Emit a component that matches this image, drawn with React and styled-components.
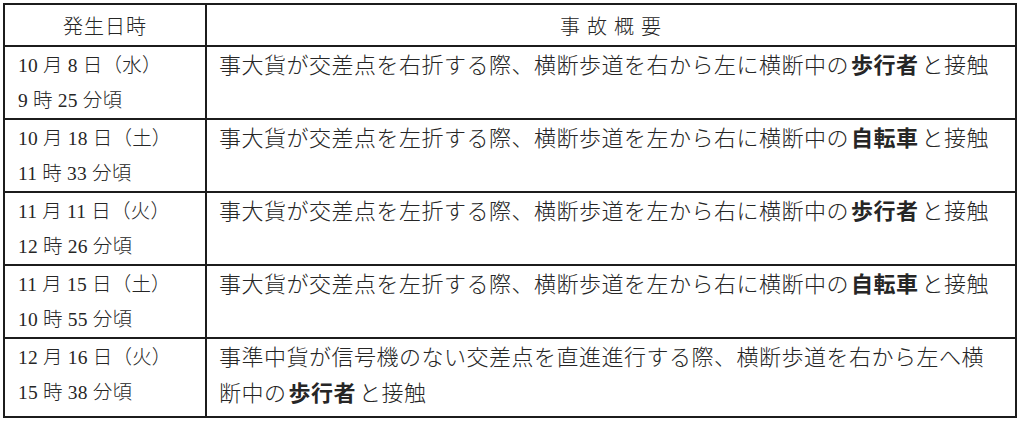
import React from "react";
import styled, { createGlobalStyle } from "styled-components";

const GlobalStyle = createGlobalStyle`
    body {
        margin: 0;
        background: #ffffff;
    }
`;

const accidents = [
    { date: "10 月 8 日（水）", time: "9 時 25 分頃", before: "事大貨が交差点を右折する際、横断歩道を右から左に横断中の", target: "歩行者", after: "と接触", tall: false },
    { date: "10 月 18 日（土）", time: "11 時 33 分頃", before: "事大貨が交差点を左折する際、横断歩道を左から右に横断中の", target: "自転車", after: "と接触", tall: false },
    { date: "11 月 11 日（火）", time: "12 時 26 分頃", before: "事大貨が交差点を左折する際、横断歩道を左から右に横断中の", target: "歩行者", after: "と接触", tall: false },
    { date: "11 月 15 日（土）", time: "10 時 55 分頃", before: "事大貨が交差点を左折する際、横断歩道を左から右に横断中の", target: "自転車", after: "と接触", tall: false },
    { date: "12 月 16 日（火）", time: "15 時 38 分頃", before: "事準中貨が信号機のない交差点を直進進行する際、横断歩道を右から左へ横断中の", target: "歩行者", after: "と接触", tall: true },
];

export default function App() {
    return (
        <>
            <GlobalStyle />
            <Page>
                <Table>
                    <HeadCell>発生日時</HeadCell>
                    <HeadCell>事 故 概 要</HeadCell>

                    {accidents.map((item, index) => (
                        <React.Fragment key={index}>
                            <DateCell $tall={item.tall}>
                                <div>{item.date}</div>
                                <div>{item.time}</div>
                            </DateCell>
                            <SummaryCell $tall={item.tall}>
                                {item.before}<Strong>{item.target}</Strong>{item.after}
                            </SummaryCell>
                        </React.Fragment>
                    ))}
                </Table>
            </Page>
        </>
    );
}

const Page = styled.div`
    padding: 3px 0 0 3px;
    font-family: "Liberation Serif", "Noto Sans CJK JP", serif;
    color: #262626;
`;

const Table = styled.div`
    display: grid;
    grid-template-columns: 202px 810px;
    width: 1014px;
    border-top: 2px solid #1c1c1c;
    border-left: 2px solid #1c1c1c;
    box-sizing: border-box;
`;

const Cell = styled.div`
    box-sizing: border-box;
    border-right: 2px solid #1c1c1c;
    border-bottom: 2px solid #1c1c1c;
    font-weight: 300;
`;

const HeadCell = styled(Cell)`
    height: 42px;
    display: flex;
    align-items: center;
    justify-content: center;
    font-size: 20px;
    letter-spacing: 1px;
    white-space: pre;
`;

const DateCell = styled(Cell)`
    height: ${(p) => (p.$tall ? "79px" : "73px")};
    padding: 1px 0 0 13px;
    font-size: 19.5px;
    line-height: 35px;
    letter-spacing: 0.2px;
    white-space: pre;
`;

const SummaryCell = styled(Cell)`
    height: ${(p) => (p.$tall ? "79px" : "73px")};
    padding: 1px 18px 0 12px;
    font-size: 22px;
    line-height: 36px;
    letter-spacing: 0.5px;
`;

const Strong = styled.span`
    font-weight: 600;
    padding: 0 3px 0 2px;
`;
